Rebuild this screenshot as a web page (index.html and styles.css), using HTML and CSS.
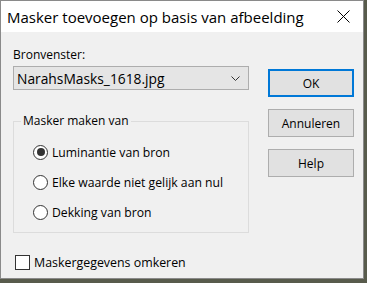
FILE: index.html
```html
<!DOCTYPE html>
<html>
<head>
  <meta charset="UTF-8">
  <title>Masker toevoegen op basis van afbeelding</title>
  <link rel="stylesheet" href="styles.css">
</head>
<body>
  <div class="window">
    <div class="titlebar">
      <span class="title">Masker toevoegen op basis van afbeelding</span>
      <svg class="close" width="13" height="13" viewBox="0 0 13 13">
        <path d="M0.5 0.5 L12.5 12.5 M12.5 0.5 L0.5 12.5" stroke="#000" stroke-width="1" fill="none"/>
      </svg>
    </div>
    <div class="client">
      <div class="main">
        <div class="left">
          <div class="field-label">Bronvenster:</div>
          <div class="select">
            <span>NarahsMasks_1618.jpg</span>
            <svg class="chevron" width="9" height="5" viewBox="0 0 9 5">
              <path d="M0.5 0.5 L4.5 4.5 L8.5 0.5" stroke="#333" stroke-width="1" fill="none"/>
            </svg>
          </div>
          <fieldset class="group">
            <legend>Masker maken van</legend>
            <div class="options">
              <div class="radio"><span class="circle checked"></span>Luminantie van bron</div>
              <div class="radio"><span class="circle"></span>Elke waarde niet gelijk aan nul</div>
              <div class="radio"><span class="circle"></span>Dekking van bron</div>
            </div>
          </fieldset>
        </div>
        <div class="buttons">
          <button class="btn default">OK</button>
          <button class="btn">Annuleren</button>
          <button class="btn">Help</button>
        </div>
      </div>
      <div class="check"><span class="box"></span>Maskergegevens omkeren</div>
    </div>
  </div>
</body>
</html>
```

FILE: styles.css
```css
body {
  margin: 0;
  background-color: #585b4c;
  font-family: "Open Sans", Arial, sans-serif;
  color: #000;
}
.window {
  width: 364px;
  height: 279px;
  box-sizing: border-box;
  border: 1px solid #8a8a8a;
  background-color: #f0f0f0;
  display: flex;
  flex-direction: column;
}
.titlebar {
  height: 31px;
  background-color: #fff;
  display: flex;
  align-items: center;
  justify-content: space-between;
  padding: 0 13px 0 6px;
}
.title {
  font-size: 15px;
}
.client {
  padding: 14px 0 0 12px;
  font-size: 12px;
}
.main {
  display: flex;
  align-items: flex-start;
  gap: 19px;
}
.left {
  width: 236px;
}
.field-label {
  height: 18px;
  line-height: 18px;
  margin-bottom: 2px;
}
.select {
  height: 24px;
  box-sizing: border-box;
  border: 1px solid #adadad;
  background-color: #e5e5e5;
  display: flex;
  align-items: center;
  justify-content: space-between;
  padding: 0 8px 0 3px;
  font-size: 13.8px;
}
.group {
  margin: 22px 0 0;
  padding: 0 0 5px;
  border: 1px solid #dcdcdc;
}
.group legend {
  margin-left: 7px;
  padding: 0 2px;
  line-height: 18px;
  font-size: 12px;
}
.options {
  padding: 7px 0 0 19px;
}
.radio {
  height: 30px;
  display: flex;
  align-items: center;
  gap: 4px;
  font-size: 12.2px;
}
.circle {
  width: 15px;
  height: 15px;
  box-sizing: border-box;
  border: 1px solid #333;
  border-radius: 50%;
  background-color: #fff;
  display: flex;
  align-items: center;
  justify-content: center;
}
.circle.checked::after {
  content: "";
  width: 8px;
  height: 8px;
  border-radius: 50%;
  background-color: #333;
}
.buttons {
  padding-top: 23px;
  display: flex;
  flex-direction: column;
  gap: 12px;
}
.btn {
  width: 86px;
  height: 28px;
  border: 1px solid #adadad;
  background-color: #e1e1e1;
  font-family: inherit;
  font-size: 12px;
  color: #000;
  padding: 0;
}
.btn.default {
  border: 2px solid #0078d7;
}
.check {
  margin-top: 19px;
  margin-left: 2px;
  height: 20px;
  display: flex;
  align-items: center;
  gap: 4px;
  font-size: 12.4px;
}
.box {
  width: 15px;
  height: 15px;
  box-sizing: border-box;
  border: 1px solid #333;
  background-color: #fff;
}
```
